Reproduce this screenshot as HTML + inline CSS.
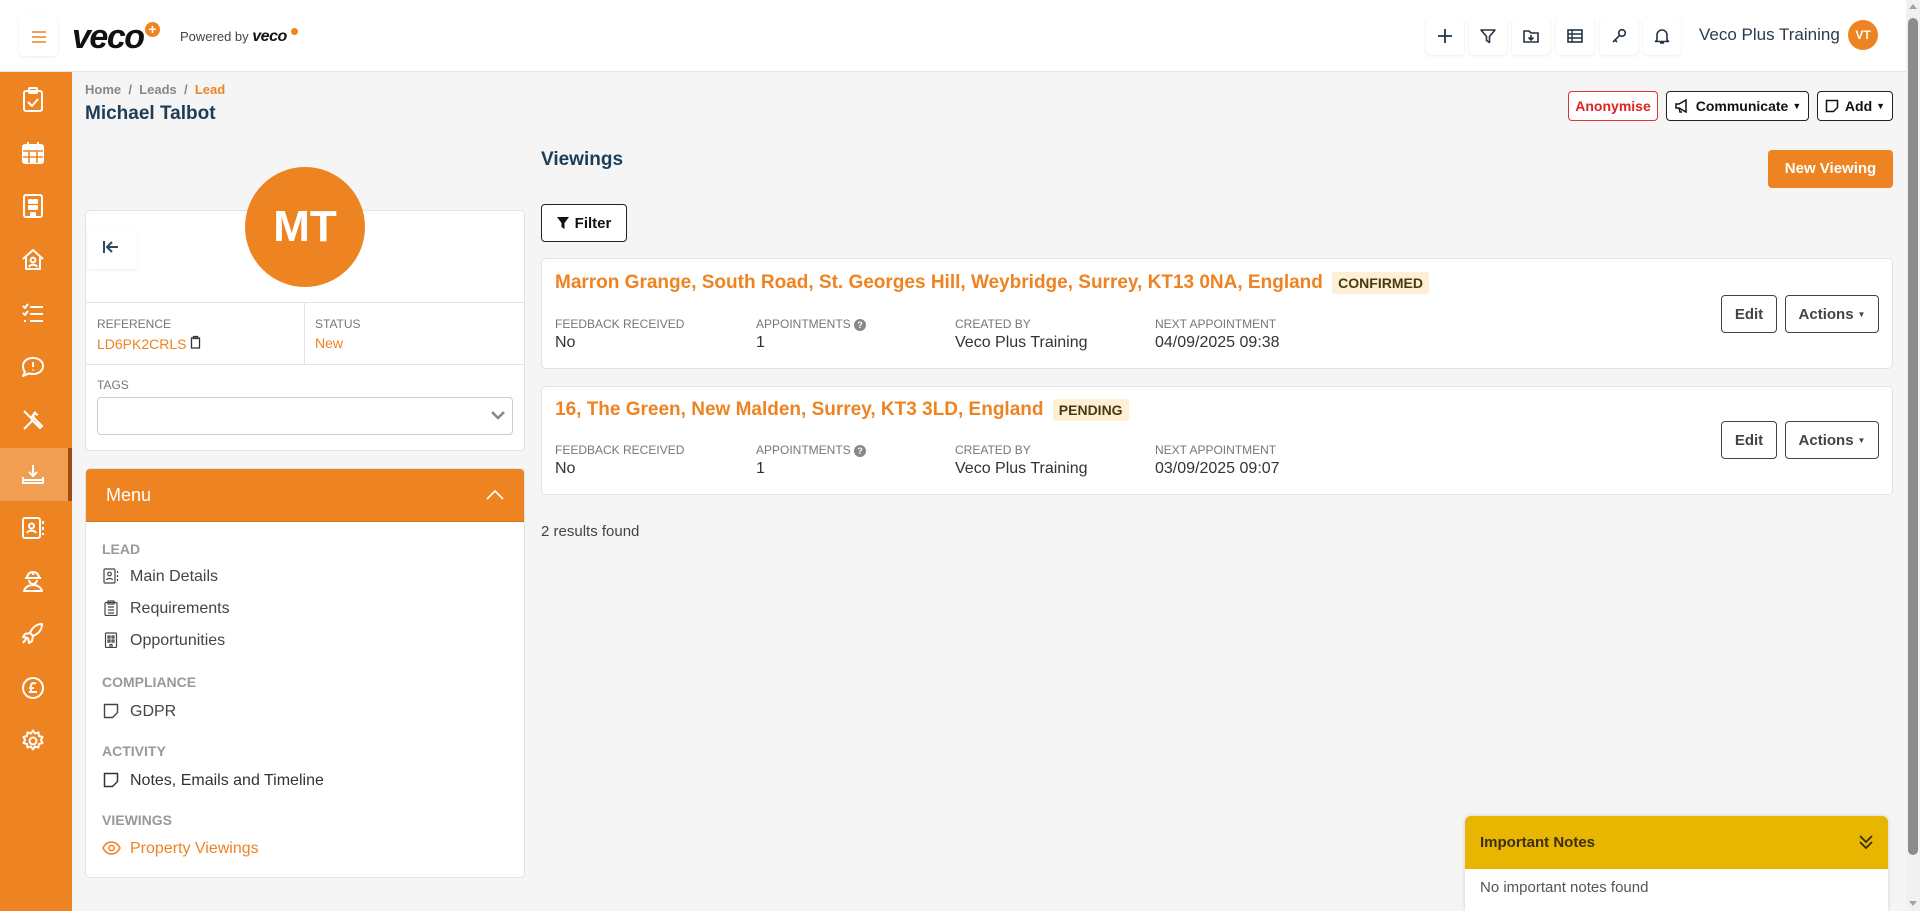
<!DOCTYPE html>
<html><head><meta charset="utf-8"><style>
*{box-sizing:border-box;margin:0;padding:0}
body{width:1920px;height:911px;overflow:hidden;background:#f5f5f5;font-family:"Liberation Sans",sans-serif;color:#333;position:relative}
.abs{position:absolute}
.hdr{left:0;top:0;width:1906px;height:72px;background:#fff;border-bottom:1px solid #e6e6e6}
.side{left:0;top:72px;width:72px;height:839px;background:#ee8322}
.sic{position:absolute;left:22px;width:22px;height:22px}
.ib{position:absolute;top:17px;width:38px;height:38px;border-radius:5px;box-shadow:0 1px 3px rgba(0,0,0,.08);display:flex;align-items:center;justify-content:center}
.btn{position:absolute;border:1px solid #222;border-radius:4px;background:#fff;font-weight:bold;font-size:14px;display:flex;align-items:center;justify-content:center;color:#111}
.card{position:absolute;background:#fff;border:1px solid #e3e3e3;border-radius:5px}
.lbl{position:absolute;font-size:12px;color:#777;text-transform:uppercase}
.val{position:absolute;font-size:16px;color:#333}
.mi{position:absolute;left:130px;font-size:16px;color:#444}
.mh{position:absolute;left:102px;font-size:14px;color:#999;font-weight:bold}
.mic{position:absolute;left:103px;width:16px;height:16px}
</style></head><body>
<div class="abs hdr"></div>
<div class="abs" style="left:19px;top:16px;width:39px;height:40px;border-radius:5px;box-shadow:0 1px 3px rgba(0,0,0,.08)"></div>
<svg class="abs" style="left:31px;top:30px" width="16" height="14"><path d="M1 2h14M1 7h14M1 12h14" stroke="#ee8322" stroke-width="1.6"/></svg>
<div class="abs" style="left:72px;top:18px;font-size:34px;font-weight:bold;font-style:italic;color:#111;letter-spacing:-1.5px">veco</div>
<div class="abs" style="left:145px;top:22px;width:15px;height:15px;border-radius:50%;background:#ee8322;color:#fff;font-size:14px;font-weight:bold;line-height:14px;text-align:center">+</div>
<div class="abs" style="left:180px;top:28px;font-size:13px;color:#444">Powered by <b style="font-style:italic;font-size:16px;color:#111;letter-spacing:-.5px">veco</b></div>
<div class="abs" style="left:291px;top:28px;width:7px;height:7px;border-radius:50%;background:#ee8322"></div>

<div class="ib" style="left:1426px"><svg width="16" height="16"><path d="M8 1v14M1 8h14" stroke="#234" stroke-width="1.8"/></svg></div>
<div class="ib" style="left:1469px"><svg width="18" height="18"><path d="M2 3h14l-5.5 6.5v6l-3-2v-4z" fill="none" stroke="#234" stroke-width="1.6" stroke-linejoin="round"/></svg></div>
<div class="ib" style="left:1512px"><svg width="18" height="18"><path d="M2 4h5l2 2h7v9H2z" fill="none" stroke="#234" stroke-width="1.6"/><path d="M9 8v5M6.5 10.5L9 13l2.5-2.5" fill="none" stroke="#234" stroke-width="1.6"/></svg></div>
<div class="ib" style="left:1556px"><svg width="18" height="18"><rect x="2" y="3" width="14" height="12" fill="none" stroke="#234" stroke-width="1.6"/><path d="M2 7h14M2 11h14M6 3v12" stroke="#234" stroke-width="1.4"/></svg></div>
<div class="ib" style="left:1600px"><svg width="18" height="18"><circle cx="12" cy="6" r="3.3" fill="none" stroke="#234" stroke-width="1.6"/><path d="M9.6 8.4L3 15M5 13l2 2" stroke="#234" stroke-width="1.6"/></svg></div>
<div class="ib" style="left:1643px"><svg width="18" height="18"><path d="M4 13V8a5 5 0 0110 0v5l1.5 1.5h-13z M7 16h4" fill="none" stroke="#234" stroke-width="1.6" stroke-linejoin="round"/></svg></div>
<div class="abs" style="left:1699px;top:25px;font-size:17px;color:#2b3a4a">Veco Plus Training</div>
<div class="abs" style="left:1848px;top:20px;width:30px;height:30px;border-radius:50%;background:#ee8322;color:#fff;font-size:12px;font-weight:bold;line-height:30px;text-align:center">VT</div>

<div class="abs side"></div>
<div class="abs" style="left:0;top:448px;width:72px;height:53px;background:#f19e52"></div>
<div class="abs" style="left:68px;top:448px;width:4px;height:53px;background:#9a4d0c"></div>
<svg class="abs" style="left:0;top:72px" width="72" height="700" fill="none" stroke="#fff" stroke-width="2" stroke-linejoin="round">
<g transform="translate(22,16)"><rect x="2" y="3" width="18" height="20" rx="2"/><rect x="7" y="0" width="8" height="5" rx="1"/><path d="M6 14l4 4 6-7"/></g>
<g transform="translate(22,70)"><rect x="1" y="3" width="20" height="18" rx="2" fill="#fff"/><path d="M6 0v5M16 0v5" /><path d="M1 9h20M7 9v12M15 9v12M1 15h20" stroke="#ee8322" stroke-width="1.6"/></g>
<g transform="translate(23,122)"><rect x="1" y="1" width="18" height="22" rx="2"/><path d="M6 6h3v3H6zM11 6h3v3h-3zM6 12h3v3H6zM11 12h3v3h-3zM8 23v-4h4v4" fill="#fff"/></g>
<g transform="translate(21,176)"><path d="M2 11L12 2l10 9M5 9v12h14V9"/><circle cx="12" cy="12" r="2.4"/><path d="M8 19c1-3 7-3 8 0"/></g>
<g transform="translate(21,230)"><path d="M2 4l2 2 3-4M2 11l2 2 3-4M9 5h13M9 12h13M9 19h13M3 19h2"/></g>
<g transform="translate(21,283)"><path d="M12 3c6 0 10 3.5 10 8s-4 8-10 8c-1.5 0-3-.2-4-.6L2 21l2-4c-1.3-1.5-2-3.4-2-6 0-4.5 4-8 10-8z"/><path d="M12 7v5M12 14.5v1"/></g>
<g transform="translate(21,336)"><path d="M3 3l7 7M3 21l10-10M15 4a4 4 0 00-2 6l8 8-2 2-8-8a4 4 0 016-5"/><path d="M14 14l6 6"/></g>
<g transform="translate(21,391)"><path d="M12 2v11M8 9l4 4 4-4M2 14v6h20v-6M2 17h20"/></g>
<g transform="translate(21,444)"><rect x="2" y="2" width="17" height="20" rx="2"/><circle cx="10.5" cy="10" r="2.5"/><path d="M6 17c1-3 8-3 9 0M22 5v3M22 11v3M22 17v2"/></g>
<g transform="translate(21,497)"><path d="M6 9a6 6 0 0112 0zM4 9h16M12 3v3"/><path d="M8 11a4 4 0 008 0M3 22c1-4 5-6 9-6s8 2 9 6z"/></g>
<g transform="translate(21,550)"><path d="M21 2c-6 0-10 4-12 9l3 3c5-2 9-6 9-12zM9 11l-5 1-2 3 5 1M12 14l-1 5-3 2-1-5M5 17l-3 4"/></g>
<g transform="translate(21,604)"><circle cx="12" cy="12" r="10"/><path d="M15 8a3 3 0 00-5 1v7M8 12h5M8 16h8"/></g>
<g transform="translate(21,657)"><circle cx="12" cy="12" r="3.5"/><path d="M12 1.5l2 3 3.5-1 .5 3.5 3.5 1-1.5 3 1.5 3-3.5 1-.5 3.5-3.5-1-2 3-2-3-3.5 1-.5-3.5-3.5-1 1.5-3-1.5-3 3.5-1 .5-3.5 3.5 1z"/></g>
</svg>

<div class="abs" style="left:85px;top:82px;font-size:13px;font-weight:bold;color:#888">Home&nbsp; / &nbsp;Leads&nbsp; / &nbsp;<span style="color:#ee8322">Lead</span></div>
<div class="abs" style="left:85px;top:103px;font-size:19px;font-weight:bold;color:#1d3d57">Michael Talbot</div>
<div class="btn" style="left:1568px;top:91px;width:90px;height:30px;border-color:#d33;color:#d22;font-size:14px">Anonymise</div>
<div class="btn" style="left:1666px;top:91px;width:143px;height:30px"><svg width="16" height="14" style="margin-right:6px"><path d="M2 5h3l7-4v12l-7-4H2zM5 9l1 4h2" fill="none" stroke="#111" stroke-width="1.5"/></svg>Communicate <span style="font-size:9px;margin-left:4px">▼</span></div>
<div class="btn" style="left:1817px;top:91px;width:76px;height:30px"><svg width="14" height="14" style="margin-right:6px"><path d="M1.5 1.5h11v7l-4 4h-7z" fill="none" stroke="#111" stroke-width="1.5"/></svg>Add <span style="font-size:9px;margin-left:4px">▼</span></div>

<!-- left card -->
<div class="card" style="left:85px;top:210px;width:440px;height:241px"></div>
<div class="abs" style="left:88px;top:231px;width:49px;height:38px;box-shadow:0 1px 3px rgba(0,0,0,.07)"></div>
<svg class="abs" style="left:102px;top:239px" width="18" height="16"><path d="M2 2v12M16 8H6M10 3L5 8l5 5" fill="none" stroke="#2c4a63" stroke-width="2"/></svg>
<div class="abs" style="left:245px;top:167px;width:120px;height:120px;border-radius:50%;background:#ee8322;color:#fff;font-size:44px;font-weight:bold;text-align:center;line-height:120px">MT</div>
<div class="abs" style="left:86px;top:302px;width:438px;height:1px;background:#e3e3e3"></div>
<div class="abs" style="left:304px;top:303px;width:1px;height:61px;background:#e3e3e3"></div>
<div class="abs" style="left:86px;top:364px;width:438px;height:1px;background:#e3e3e3"></div>
<div class="lbl" style="left:97px;top:317px">Reference</div>
<div class="abs" style="left:97px;top:335px;font-size:14px;color:#ee8322">LD6PK2CRLS <svg width="11" height="14"><path d="M1.5 3h8v10h-8z M3.5 1.5h4v2h-4z" fill="none" stroke="#333" stroke-width="1.3"/></svg></div>
<div class="lbl" style="left:315px;top:317px">Status</div>
<div class="abs" style="left:315px;top:335px;font-size:14px;color:#ee8322">New</div>
<div class="lbl" style="left:97px;top:378px">Tags</div>
<div class="abs" style="left:97px;top:397px;width:416px;height:38px;border:1px solid #ccc;border-radius:4px;background:#fff"></div>
<svg class="abs" style="left:490px;top:410px" width="16" height="12"><path d="M2 2l6 6 6-6" fill="none" stroke="#888" stroke-width="2.5"/></svg>

<!-- menu -->
<div class="card" style="left:85px;top:468px;width:440px;height:410px;overflow:hidden">
<div style="height:53px;background:#ee8322;color:#fff;font-size:18px;padding:16px 0 0 20px;border-bottom:1px solid #d57018">Menu</div>
</div>
<svg class="abs" style="left:486px;top:489px" width="18" height="11"><path d="M1 10l8-8 8 8" fill="none" stroke="#fff" stroke-width="1.6"/></svg>
<div class="mh" style="top:541px">LEAD</div>
<svg class="mic" style="top:568px" fill="none" stroke="#444" stroke-width="1.2"><rect x="1" y="1" width="11" height="14" rx="1"/><circle cx="6.5" cy="6" r="1.8"/><path d="M3.5 12c.5-2 5.5-2 6 0M14.5 3v2M14.5 7v2M14.5 11v2"/></svg>
<div class="mi" style="top:568px">Main Details</div>
<svg class="mic" style="top:600px" fill="none" stroke="#444" stroke-width="1.2"><rect x="2" y="2.5" width="12" height="13" rx="1"/><rect x="5" y="1" width="6" height="3"/><path d="M5 7h6M5 10h6M5 13h6"/></svg>
<div class="mi" style="top:600px">Requirements</div>
<svg class="mic" style="top:632px" fill="none" stroke="#444" stroke-width="1.2"><rect x="2.5" y="1" width="11" height="14.5" rx="1"/><path d="M5 4h2v2H5zM9 4h2v2H9zM5 8h2v2H5zM9 8h2v2H9zM7 15.5v-3h2v3"/></svg>
<div class="mi" style="top:632px">Opportunities</div>
<div class="mh" style="top:674px">COMPLIANCE</div>
<svg class="mic" style="top:703px" fill="none" stroke="#444" stroke-width="1.4"><path d="M1.5 1.5h13v8l-5 5h-8z"/></svg>
<div class="mi" style="top:703px">GDPR</div>
<div class="mh" style="top:743px">ACTIVITY</div>
<svg class="mic" style="top:772px" fill="none" stroke="#333" stroke-width="1.5"><path d="M1.5 1.5h13v8l-5 5h-8z"/></svg>
<div class="mi" style="top:772px;color:#333">Notes, Emails and Timeline</div>
<div class="mh" style="top:812px">VIEWINGS</div>
<svg class="abs" style="left:102px;top:840px" width="19" height="16" fill="none" stroke="#ee8322" stroke-width="1.5"><path d="M1 8c2-4 5-6 8.5-6S16 4 18 8c-2 4-5 6-8.5 6S3 12 1 8z"/><circle cx="9.5" cy="8" r="2.6"/></svg>
<div class="mi" style="top:840px;color:#ee8322">Property Viewings</div>

<!-- viewings -->
<div class="abs" style="left:541px;top:149px;font-size:19px;font-weight:bold;color:#1d3d57">Viewings</div>
<div class="abs" style="left:1768px;top:150px;width:125px;height:38px;background:#ee8322;border-radius:4px;color:#fff;font-weight:bold;font-size:15px;text-align:center;line-height:38px">New Viewing</div>
<div class="btn" style="left:541px;top:204px;width:86px;height:38px;font-size:15px"><svg width="12" height="12" style="margin-right:6px"><path d="M0 0h12L7.5 6v6l-3-2V6z" fill="#111"/></svg>Filter</div>

<div class="card" style="left:541px;top:258px;width:1352px;height:111px"></div>
<div class="abs" style="left:555px;top:272px;font-size:19px;font-weight:bold;color:#ee8322">Marron Grange, South Road, St. Georges Hill, Weybridge, Surrey, KT13 0NA, England <span style="background:#fdf0d5;color:#4a3a10;font-size:14px;padding:3px 6px;border-radius:3px;margin-left:4px">CONFIRMED</span></div>
<div class="lbl" style="left:555px;top:317px">Feedback Received</div><div class="val" style="left:555px;top:334px">No</div>
<div class="lbl" style="left:756px;top:317px">Appointments <span style="display:inline-block;width:12px;height:12px;border-radius:50%;background:#888;color:#fff;font-size:9px;text-align:center;line-height:12px;font-weight:bold">?</span></div><div class="val" style="left:756px;top:334px">1</div>
<div class="lbl" style="left:955px;top:317px">Created By</div><div class="val" style="left:955px;top:334px">Veco Plus Training</div>
<div class="lbl" style="left:1155px;top:317px">Next Appointment</div><div class="val" style="left:1155px;top:334px">04/09/2025 09:38</div>
<div class="btn" style="left:1721px;top:295px;width:56px;height:38px;border-color:#444;color:#444;font-size:15px">Edit</div>
<div class="btn" style="left:1785px;top:295px;width:94px;height:38px;border-color:#444;color:#444;font-size:15px">Actions <span style="font-size:8px;margin-left:4px">▼</span></div>

<div class="card" style="left:541px;top:386px;width:1352px;height:109px"></div>
<div class="abs" style="left:555px;top:399px;font-size:19px;font-weight:bold;color:#ee8322">16, The Green, New Malden, Surrey, KT3 3LD, England <span style="background:#fdf0d5;color:#4a3a10;font-size:14px;padding:3px 6px;border-radius:3px;margin-left:4px">PENDING</span></div>
<div class="lbl" style="left:555px;top:443px">Feedback Received</div><div class="val" style="left:555px;top:460px">No</div>
<div class="lbl" style="left:756px;top:443px">Appointments <span style="display:inline-block;width:12px;height:12px;border-radius:50%;background:#888;color:#fff;font-size:9px;text-align:center;line-height:12px;font-weight:bold">?</span></div><div class="val" style="left:756px;top:460px">1</div>
<div class="lbl" style="left:955px;top:443px">Created By</div><div class="val" style="left:955px;top:460px">Veco Plus Training</div>
<div class="lbl" style="left:1155px;top:443px">Next Appointment</div><div class="val" style="left:1155px;top:460px">03/09/2025 09:07</div>
<div class="btn" style="left:1721px;top:421px;width:56px;height:38px;border-color:#444;color:#444;font-size:15px">Edit</div>
<div class="btn" style="left:1785px;top:421px;width:94px;height:38px;border-color:#444;color:#444;font-size:15px">Actions <span style="font-size:8px;margin-left:4px">▼</span></div>

<div class="abs" style="left:541px;top:523px;font-size:15px;color:#444">2 results found</div>

<div class="abs" style="left:1465px;top:816px;width:423px;height:95px;background:#fff;border-radius:6px 6px 0 0;box-shadow:0 0 4px rgba(0,0,0,.15);overflow:hidden">
<div style="height:53px;background:#e8b500;font-size:15px;font-weight:bold;color:#3a2f10;padding:18px 0 0 15px">Important Notes</div>
<div style="padding:10px 0 0 15px;font-size:15px;color:#555">No important notes found</div>
</div>
<svg class="abs" style="left:1858px;top:834px" width="16" height="16"><path d="M2 2l6 6 6-6M2 8l6 6 6-6" fill="none" stroke="#3a2f10" stroke-width="1.8"/></svg>

<div class="abs" style="left:1906px;top:0;width:14px;height:911px;background:#f1f1f1"></div>
<div class="abs" style="left:1908px;top:18px;width:10px;height:837px;background:#8c8c8c;border-radius:5px"></div>
<div class="abs" style="left:1909px;top:4px;width:0;height:0;border-left:4px solid transparent;border-right:4px solid transparent;border-bottom:5px solid #a3a3a3"></div>
<div class="abs" style="left:1909px;top:901px;width:0;height:0;border-left:4px solid transparent;border-right:4px solid transparent;border-top:5px solid #a3a3a3"></div>
</body></html>
